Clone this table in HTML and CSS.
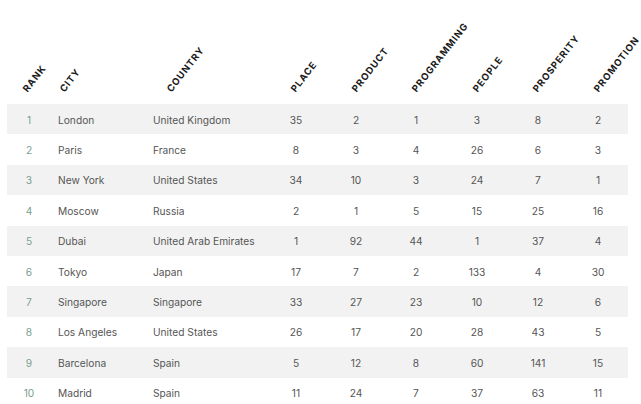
FILE: index.html
```html
<!DOCTYPE html>
<html>
<head>
<meta charset="utf-8">
<link rel="stylesheet" href="styles.css">
</head>
<body>
<table class="ranking">
  <colgroup>
    <col class="c-rank"><col class="c-city"><col class="c-country">
    <col class="c-num"><col class="c-num"><col class="c-num">
    <col class="c-num2"><col class="c-num"><col class="c-num">
  </colgroup>
  <thead>
    <tr>
      <th class="h-rank"><span>Rank</span></th>
      <th class="h-city"><span>City</span></th>
      <th class="h-country"><span>Country</span></th>
      <th class="h-place"><span>Place</span></th>
      <th class="h-product"><span>Product</span></th>
      <th class="h-programming"><span>Programming</span></th>
      <th class="h-people"><span>People</span></th>
      <th class="h-prosperity"><span>Prosperity</span></th>
      <th class="h-promotion"><span>Promotion</span></th>
    </tr>
  </thead>
  <tbody>
    <tr><td class="rank">1</td><td class="txt">London</td><td class="txt">United Kingdom</td><td>35</td><td>2</td><td>1</td><td>3</td><td>8</td><td>2</td></tr>
    <tr><td class="rank">2</td><td class="txt">Paris</td><td class="txt">France</td><td>8</td><td>3</td><td>4</td><td>26</td><td>6</td><td>3</td></tr>
    <tr><td class="rank">3</td><td class="txt">New York</td><td class="txt">United States</td><td>34</td><td>10</td><td>3</td><td>24</td><td>7</td><td>1</td></tr>
    <tr><td class="rank">4</td><td class="txt">Moscow</td><td class="txt">Russia</td><td>2</td><td>1</td><td>5</td><td>15</td><td>25</td><td>16</td></tr>
    <tr><td class="rank">5</td><td class="txt">Dubai</td><td class="txt">United Arab Emirates</td><td>1</td><td>92</td><td>44</td><td>1</td><td>37</td><td>4</td></tr>
    <tr><td class="rank">6</td><td class="txt">Tokyo</td><td class="txt">Japan</td><td>17</td><td>7</td><td>2</td><td>133</td><td>4</td><td>30</td></tr>
    <tr><td class="rank">7</td><td class="txt">Singapore</td><td class="txt">Singapore</td><td>33</td><td>27</td><td>23</td><td>10</td><td>12</td><td>6</td></tr>
    <tr><td class="rank">8</td><td class="txt">Los Angeles</td><td class="txt">United States</td><td>26</td><td>17</td><td>20</td><td>28</td><td>43</td><td>5</td></tr>
    <tr><td class="rank">9</td><td class="txt">Barcelona</td><td class="txt">Spain</td><td>5</td><td>12</td><td>8</td><td>60</td><td>141</td><td>15</td></tr>
    <tr><td class="rank">10</td><td class="txt">Madrid</td><td class="txt">Spain</td><td>11</td><td>24</td><td>7</td><td>37</td><td>63</td><td>11</td></tr>
  </tbody>
</table>
</body>
</html>
```

FILE: styles.css
```css
html, body {
  margin: 0;
  padding: 0;
  background: #ffffff;
}
body {
  overflow: hidden;
  font-family: "Inter", "Roboto", sans-serif;
}
.ranking {
  margin-left: 7px;
  width: 621px;
  border-collapse: collapse;
  table-layout: fixed;
}
.c-rank { width: 44px; }
.c-city { width: 95px; }
.c-country { width: 120px; }
.c-num { width: 60px; }
.c-num2 { width: 62px; }

thead th {
  height: 104px;
  padding: 0 0 8px 0;
  box-sizing: border-box;
  vertical-align: bottom;
  text-align: left;
  white-space: nowrap;
}
thead th span {
  display: inline-block;
  font-size: 9.5px;
  line-height: 10px;
  font-weight: 700;
  letter-spacing: 0.9px;
  text-transform: uppercase;
  color: #1a1a1a;
  transform-origin: left bottom;
  transform: rotate(-52deg);
}
.h-rank { padding-left: 22px; }
.h-city { padding-left: 15px; }
.h-country { padding-left: 27px; }
.h-place { padding-left: 31px; }
.h-product { padding-left: 32px; }
.h-programming { padding-left: 32px; }
.h-people { padding-left: 33px; }
.h-prosperity { padding-left: 31px; }
.h-promotion { padding-left: 32px; }

tbody tr {
  height: 30.4px;
}
tbody tr:nth-child(odd) {
  background: #f2f2f2;
}
tbody td {
  padding: 1px 0 0 0;
  font-size: 10.2px;
  color: #555555;
  text-align: center;
  vertical-align: middle;
  white-space: nowrap;
}
tbody td.rank {
  color: #7a9e8d;
}
tbody td.txt {
  text-align: left;
  padding-left: 7px;
}
```
